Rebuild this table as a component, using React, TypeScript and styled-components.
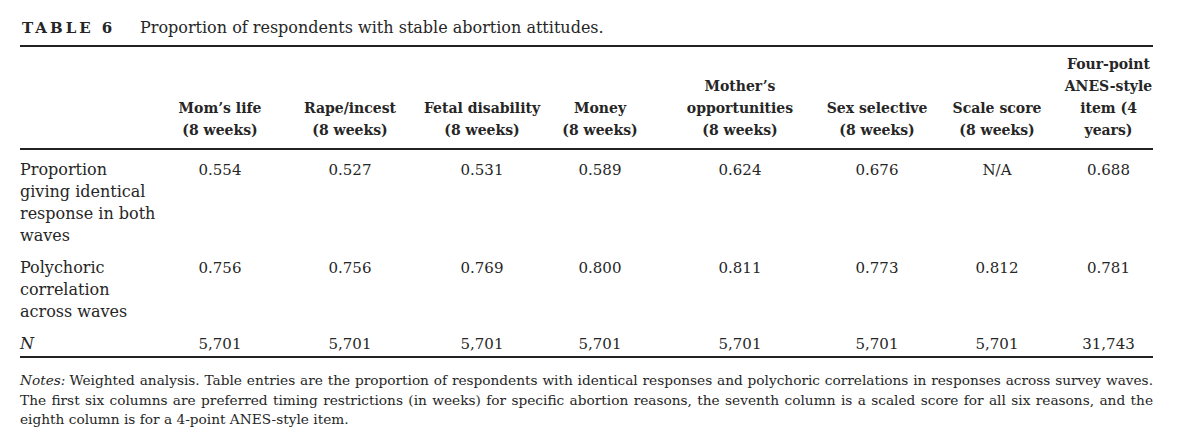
import styled, { createGlobalStyle } from "styled-components";

const GlobalStyle = createGlobalStyle`
  body {
    margin: 0;
    background: #ffffff;
    color: #262626;
    font-family: "DejaVu Serif", "Liberation Serif", serif;
  }
`;

const Page = styled.div`
  width: 1133px;
  padding-left: 20px;
`;

const Caption = styled.div`
  display: flex;
  align-items: baseline;
  height: 27px;
  padding-top: 18px;
  line-height: 20px;
  border-bottom: 2px solid #222;
`;

const TableNumber = styled.span`
  width: 118px;
  padding-left: 2px;
  font-size: 15px;
  font-weight: 700;
  letter-spacing: 3px;
`;

const Title = styled.span`
  font-size: 16px;
`;

const Table = styled.table`
  width: 100%;
  border-collapse: collapse;
  table-layout: fixed;
`;

const Head = styled.th`
  font-size: 14px;
  font-weight: 700;
  line-height: 22px;
  text-align: center;
  white-space: nowrap;
  vertical-align: bottom;
  padding: 6px 0 7px;
  border-bottom: 2px solid #222;
`;

const Row = styled.tr<{ $last?: boolean }>`
  border-bottom: ${(p) => (p.$last ? "2px solid #222" : "none")};
`;

const Label = styled.td<{ $italic?: boolean }>`
  font-size: 16px;
  line-height: 22px;
  text-align: left;
  vertical-align: top;
  padding: 9px 0 1px;
  font-style: ${(p) => (p.$italic ? "italic" : "normal")};
`;

const Value = styled.td`
  font-size: 15px;
  line-height: 22px;
  text-align: center;
  vertical-align: top;
  padding: 9px 0 1px;
`;

const Notes = styled.p`
  margin: 13px 0 0;
  font-size: 13.7px;
  line-height: 19.5px;
  text-align: justify;
`;

const NotesLead = styled.em`
  display: inline-block;
  font-style: italic;
  margin-right: 4px;
`;

const widths = [140, 120, 140, 124, 112, 168, 106, 134, 89];

const headers = [
  ["Mom’s life", "(8 weeks)"],
  ["Rape/incest", "(8 weeks)"],
  ["Fetal disability", "(8 weeks)"],
  ["Money", "(8 weeks)"],
  ["Mother’s", "opportunities", "(8 weeks)"],
  ["Sex selective", "(8 weeks)"],
  ["Scale score", "(8 weeks)"],
  ["Four-point", "ANES-style", "item (4", "years)"],
];

const rows = [
  {
    label: "Proportion giving identical response in both waves",
    values: ["0.554", "0.527", "0.531", "0.589", "0.624", "0.676", "N/A", "0.688"],
  },
  {
    label: "Polychoric correlation across waves",
    values: ["0.756", "0.756", "0.769", "0.800", "0.811", "0.773", "0.812", "0.781"],
  },
  {
    label: "N",
    italic: true,
    values: ["5,701", "5,701", "5,701", "5,701", "5,701", "5,701", "5,701", "31,743"],
  },
];

export default function App() {
  return (
    <>
      <GlobalStyle />
      <Page>
        <Caption>
          <TableNumber>TABLE 6</TableNumber>
          <Title>Proportion of respondents with stable abortion attitudes.</Title>
        </Caption>
        <Table>
          <colgroup>
            {widths.map((w, i) => (
              <col key={i} style={{ width: w }} />
            ))}
          </colgroup>
          <thead>
            <tr>
              <Head />
              {headers.map((lines) => (
                <Head key={lines[0]}>
                  {lines.map((l, k) => (
                    <span key={k}>
                      {k > 0 && <br />}
                      {l}
                    </span>
                  ))}
                </Head>
              ))}
            </tr>
          </thead>
          <tbody>
            {rows.map((r, i) => (
              <Row key={r.label} $last={i === rows.length - 1}>
                <Label $italic={r.italic}>{r.label}</Label>
                {r.values.map((v, j) => (
                  <Value key={j}>{v}</Value>
                ))}
              </Row>
            ))}
          </tbody>
        </Table>
        <Notes>
          <NotesLead>Notes:</NotesLead>Weighted analysis. Table entries are the proportion of
          respondents with identical responses and polychoric correlations in responses across
          survey waves. The first six columns are preferred timing restrictions (in weeks) for
          specific abortion reasons, the seventh column is a scaled score for all six reasons, and
          the eighth column is for a 4-point ANES-style item.
        </Notes>
      </Page>
    </>
  );
}
